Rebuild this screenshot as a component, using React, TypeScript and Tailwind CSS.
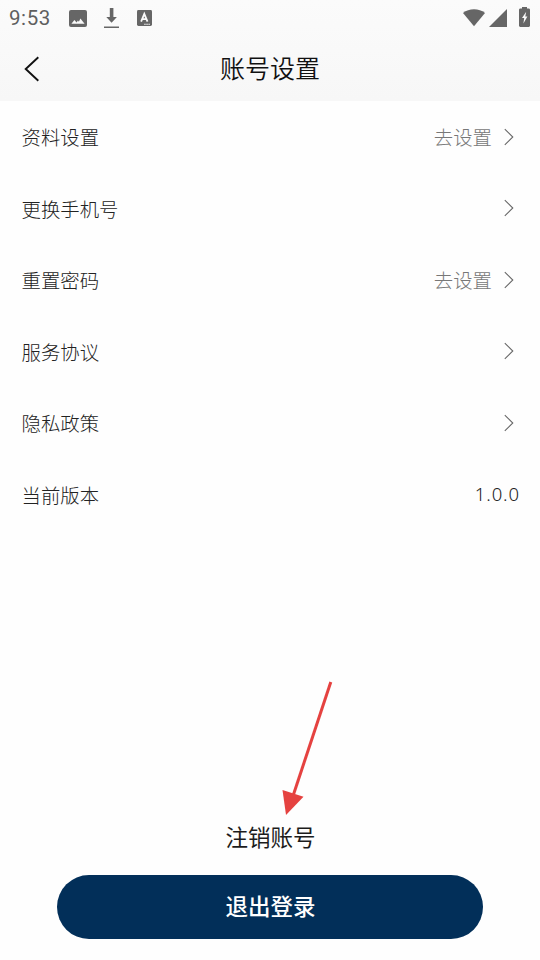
import React from "react";

type Row = { label: string; hint?: string; value?: string };

const rows: Row[] = [
  { label: "资料设置", hint: "去设置" },
  { label: "更换手机号" },
  { label: "重置密码", hint: "去设置" },
  { label: "服务协议" },
  { label: "隐私政策" },
  { label: "当前版本", value: "1.0.0" },
];

function StatusBar() {
  return (
    <div className="flex h-9 items-center pl-[9px] pr-[10px] text-[#5f5f5f]">
      <span className="w-[60px] font-['Roboto',sans-serif] text-[20.5px] leading-9 tracking-[0.6px]">9:53</span>
      <svg width="18" height="17" viewBox="0 0 18 17" className="shrink-0">
        <rect width="18" height="17" rx="2" fill="#666" />
        <path d="M2.4 13.8 5.4 10l2.2 2.4 1.3-2 1 1.4 1.5-3.4 4.2 5.4Z" fill="#fafafa" />
      </svg>
      <svg width="15" height="20" viewBox="0 0 15 20" className="ml-[17px] shrink-0" fill="#666">
        <path d="M5.8 0h3.6v9h3.5l-5.3 5.8L2.3 9h3.5ZM0 18.4h15V20H0Z" />
      </svg>
      <svg width="15" height="16" viewBox="0 0 15 16" className="ml-[18px] shrink-0">
        <rect width="15" height="16" rx="1.4" fill="#666" />
        <path d="m4.1 11.6 3.2-7.7 3.2 7.7M5.2 9.1h4.2" fill="none" stroke="#fafafa" strokeWidth="1.8" />
        <path d="M7.2 14.3h6" stroke="#fafafa" strokeWidth="1.1" strokeDasharray="1.5 .6" />
      </svg>
      <svg width="22" height="18" viewBox="0 0 22 18" className="ml-auto shrink-0" fill="#666">
        <path d="M0 3.9C6-1 16-1 22 3.9L11 17.3Z" />
      </svg>
      <svg width="18" height="18" viewBox="0 0 18 18" className="ml-[4px] shrink-0" fill="#666">
        <path d="M18 0v18H0Z" />
      </svg>
      <svg width="11" height="20" viewBox="0 0 11 20" className="mb-[2px] ml-[12px] shrink-0">
        <path d="M3 0h5v1.6h2.2l.8.8V19l-1 1H1l-1-1V2.4l.8-.8H3Z" fill="#666" />
        <path d="M7.2 4.8 3 11h2.2l-.8 5.6 4-7.2H6.3Z" fill="#fafafa" />
      </svg>
    </div>
  );
}

function Chevron() {
  return (
    <svg width="10" height="18" viewBox="0 0 10 18" fill="none" stroke="#666" strokeWidth="1.05">
      <path d="m.8 1.2 8 7.8-8 7.8" />
    </svg>
  );
}

export default function App() {
  return (
    <div className="relative flex h-[960px] w-[540px] flex-col overflow-hidden bg-[#fefefe] font-['Noto_Sans_CJK_SC',sans-serif]">
      <header className="h-[101px] bg-linear-to-b from-[#fbfbfb] to-[#f7f7f7]">
        <StatusBar />
        <div className="grid h-[65px] grid-cols-[100px_1fr_100px] items-center">
          <svg width="16" height="26" viewBox="0 0 16 26" className="ml-[23.5px]" fill="none" stroke="#111" strokeWidth="1.9">
            <path d="M14.3 1.2 1.7 13l12.6 11.8" />
          </svg>
          <h1 className="pb-[3px] text-center text-[25px] leading-[62px] font-[350] text-[#111]">账号设置</h1>
        </div>
      </header>
      <main className="flex flex-col">
        {rows.map((row) => (
          <div key={row.label} className="flex h-[71.5px] items-center pl-[21.5px] pr-[26.5px] text-[19.4px] font-[200] text-[#222]">
            <span>{row.label}</span>
            {row.hint && <span className="ml-auto mr-[11.5px] text-[#777]">{row.hint}</span>}
            {row.value ? (
              <span className="-mr-[6.5px] ml-auto font-['Noto_Sans','Open_Sans',sans-serif] text-[18.5px] font-light tracking-[0.9px]">{row.value}</span>
            ) : (
              <span className={row.hint ? "" : "ml-auto"}><Chevron /></span>
            )}
          </div>
        ))}
      </main>
      <footer className="mt-auto flex flex-col items-center pb-[21.5px] text-[22.5px]">
        <button className="h-[42px] pb-[2px] pl-px font-normal leading-[40px] text-[#1c1c1c]">注销账号</button>
        <button className="mt-[17px] h-[63.5px] w-[426px] rounded-full bg-[#022f59] pb-px pl-px font-medium text-white">退出登录</button>
      </footer>
      <svg width="60" height="140" viewBox="280 680 60 140" className="absolute left-[280px] top-[680px]">
        <path d="M330.8 682 293 796" stroke="#e54240" strokeWidth="3" />
        <path d="m282.5 790 21 6.8L286 815Z" fill="#e54240" />
      </svg>
    </div>
  );
}
